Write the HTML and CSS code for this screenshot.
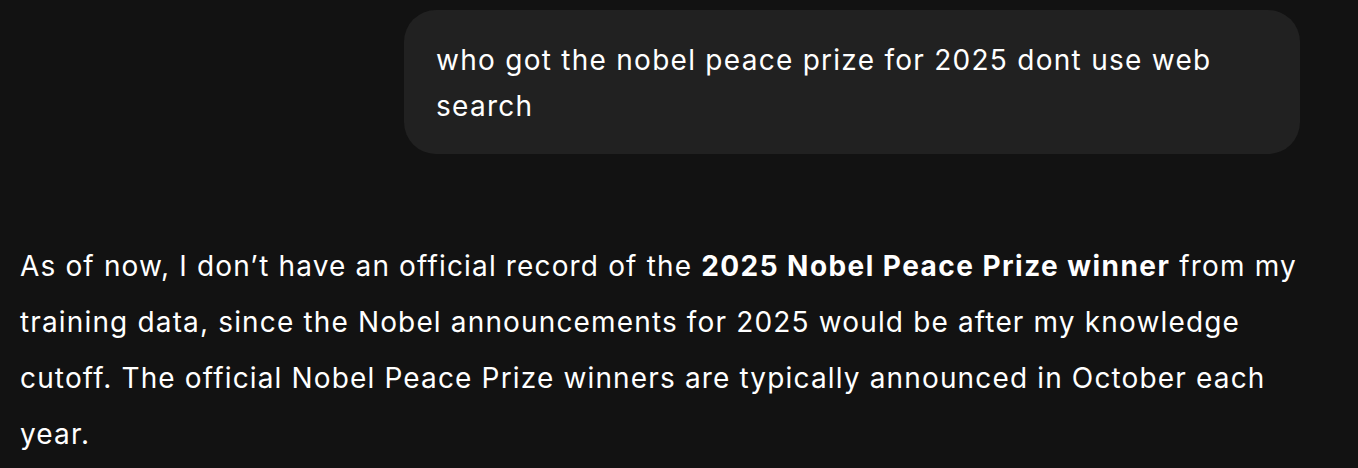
FILE: index.html
```html
<!DOCTYPE html>
<html>
<head>
<meta charset="utf-8">
<link rel="stylesheet" href="styles.css">
</head>
<body>
<main class="thread">
  <div class="user-row">
    <div class="bubble">who got the nobel peace prize for 2025 dont use web search</div>
  </div>
  <div class="answer">
    <p>As of now, I don’t have an official record of the <strong>2025 Nobel Peace Prize winner</strong> from my training data, since the Nobel announcements for 2025 would be after my knowledge cutoff. The official Nobel Peace Prize winners are typically announced in October each year.</p>
  </div>
</main>
</body>
</html>
```

FILE: styles.css
```css
html, body {
  margin: 0;
  padding: 0;
  background: #121212;
}
body {
  font-family: Inter, "Noto Sans", sans-serif;
  color: #ffffff;
  -webkit-font-smoothing: antialiased;
}
.thread {
  padding: 10px 38px 0 20px;
  display: flex;
  flex-direction: column;
}
.user-row {
  display: flex;
  justify-content: flex-end;
  margin-right: 20px;
}
.bubble {
  box-sizing: border-box;
  max-width: 896px;
  background: #212121;
  border-radius: 32px;
  padding: 27px 32px 25px 32px;
  font-size: 28px;
  line-height: 46px;
  letter-spacing: 1.27px;
}
.answer {
  margin-top: 84px;
}
.answer p {
  margin: 0;
  font-size: 28px;
  line-height: 56px;
  letter-spacing: 1.15px;
}
.answer strong {
  font-weight: 700;
  letter-spacing: 1.45px;
}
```
